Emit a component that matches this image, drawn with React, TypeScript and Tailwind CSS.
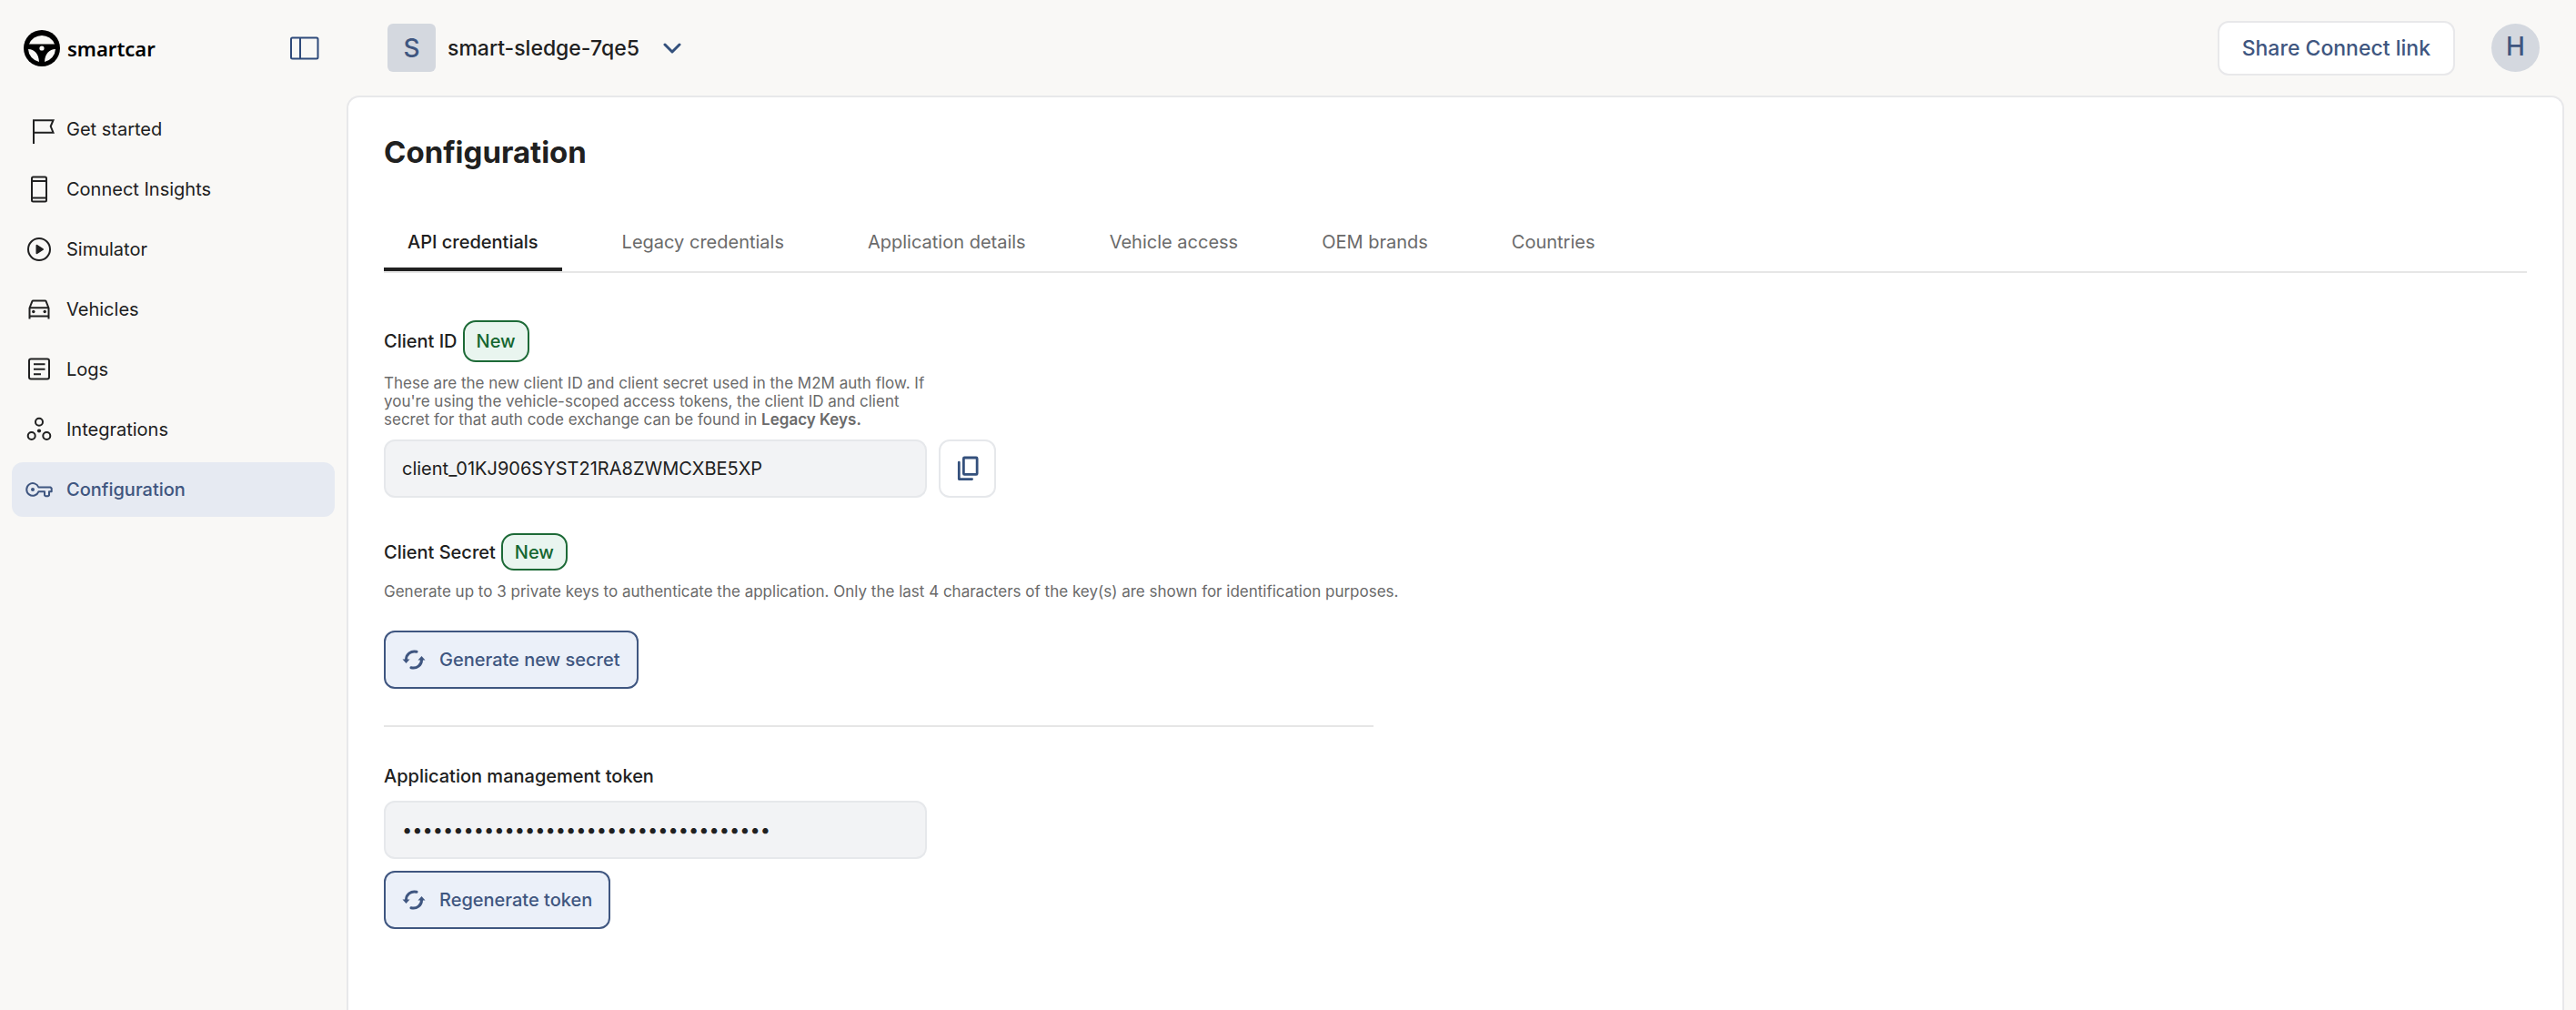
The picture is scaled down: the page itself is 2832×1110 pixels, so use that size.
import type { InputHTMLAttributes, ReactNode } from 'react';
import clsx from 'clsx';

interface IconProps {
  className?: string;
}

const navStroke = {
  viewBox: '0 0 28 28',
  fill: 'none',
  stroke: 'currentColor',
  strokeWidth: 2,
  strokeLinejoin: 'round' as const,
  'aria-hidden': true,
};

const FlagIcon = ({ className }: IconProps) => (
  <svg {...navStroke} strokeLinejoin="miter" className={className}>
    <path d="M8 30V4.200h21.500l-2.800 6.600 2.800 6.900H8" />
  </svg>
);

const PhoneIcon = ({ className }: IconProps) => (
  <svg {...navStroke} className={className}>
    <rect x="6" y="0.500" width="16" height="27" rx="1.500" />
    <path d="M6 5h16M6 23.500h16" />
  </svg>
);

const PlayIcon = ({ className }: IconProps) => (
  <svg {...navStroke} className={className}>
    <circle cx="14" cy="14" r="12" />
    <path d="M11.500 9.800v8.400l6.500-4.200z" fill="currentColor" />
  </svg>
);

const CarIcon = ({ className }: IconProps) => (
  <svg {...navStroke} className={className}>
    <path d="M3.500 24.500V12.500L6.300 5.300q.4-.8 1.200-.8h13q.8 0 1.200.8l2.800 7.200v12M3.500 12.300h21M3.500 21.500h21" />
    <circle cx="7.800" cy="16.500" r="1.700" fill="currentColor" stroke="none" />
    <circle cx="20.200" cy="16.500" r="1.700" fill="currentColor" stroke="none" />
  </svg>
);

const LogsIcon = ({ className }: IconProps) => (
  <svg {...navStroke} className={className}>
    <rect x="3" y="2.500" width="22" height="22" rx="2" />
    <path d="M8 8.200h12.500M8 13.700h12.500M8 19.200h8" />
  </svg>
);

const IntegrationsIcon = ({ className }: IconProps) => (
  <svg {...navStroke} className={className}>
    <circle cx="14" cy="5.800" r="4" />
    <circle cx="5.700" cy="21" r="4" />
    <circle cx="22.300" cy="21" r="4" />
    <circle cx="14" cy="15.500" r="2.100" fill="currentColor" stroke="none" />
  </svg>
);

const KeyIcon = ({ className }: IconProps) => (
  <svg {...navStroke} className={className}>
    <path d="M13.400 11.500H26.500l1.200 1.200v3.600H25v4l-1.500 1h-2l-1.500-1v-4h-6.600a6.800 6.800 0 1 1 0-4.800z" />
    <circle cx="7" cy="14" r="2" fill="currentColor" stroke="none" />
  </svg>
);

const PanelIcon = ({ className }: IconProps) => (
  <svg viewBox="0 0 32 26" fill="none" stroke="currentColor" strokeWidth="2" className={className} aria-hidden>
    <rect x="1" y="1.500" width="29.500" height="23" rx="1.500" />
    <path d="M11 1.500v23" />
  </svg>
);

const ChevronIcon = ({ className }: IconProps) => (
  <svg viewBox="0 0 20 12" fill="none" stroke="currentColor" strokeWidth="3" strokeLinecap="round" strokeLinejoin="round" className={className} aria-hidden>
    <path d="M2 2l8 8 8-8" />
  </svg>
);

const CopyIcon = ({ className }: IconProps) => (
  <svg viewBox="0 0 26 30" fill="none" stroke="currentColor" strokeWidth="3" strokeLinejoin="round" strokeLinecap="round" className={className} aria-hidden>
    <rect x="8" y="2" width="16" height="20" rx="1" />
    <path d="M2.500 7.500v20h15.500" />
  </svg>
);

const RefreshIcon = ({ className }: IconProps) => (
  <svg viewBox="0 0 26 22" fill="none" stroke="currentColor" strokeWidth="3" strokeLinecap="round" className={className} aria-hidden>
    <path d="M16 2.300A9 9 0 0 0 4.500 11.500" />
    <path d="M10 19.700A9 9 0 0 0 21.500 10.500" />
    <path d="M0.500 10.500h8L4.500 15z" fill="currentColor" stroke="none" />
    <path d="M17.500 11.500h8L21.500 7z" fill="currentColor" stroke="none" />
  </svg>
);

const WheelLogo = ({ className }: IconProps) => (
  <svg viewBox="0 0 40 40" className={className} aria-hidden>
    <circle cx="20" cy="20" r="20" fill="#000" />
    <path d="M6 15.500a15 15 0 0 1 28 0z" fill="#f9f8f6" />
    <path d="M5 21c7 .3 11.500 5 12 14A15 15 0 0 1 5 21zM35 21c-7 .3-11.500 5-12 14A15 15 0 0 0 35 21z" fill="#f9f8f6" />
    <circle cx="20" cy="20" r="2.600" fill="#f9f8f6" />
  </svg>
);

const navItems = [
  { label: 'Get started', icon: FlagIcon },
  { label: 'Connect Insights', icon: PhoneIcon },
  { label: 'Simulator', icon: PlayIcon },
  { label: 'Vehicles', icon: CarIcon },
  { label: 'Logs', icon: LogsIcon },
  { label: 'Integrations', icon: IntegrationsIcon },
  { label: 'Configuration', icon: KeyIcon, active: true },
];

const tabs = [
  'API credentials',
  'Legacy credentials',
  'Application details',
  'Vehicle access',
  'OEM brands',
  'Countries',
];

function Sidebar() {
  return (
    <aside className="w-[381px] shrink-0 px-[13px]">
      <div className="flex h-[106px] items-center justify-between pr-[17px] pl-[13px]">
        <a href="#" className="flex items-center gap-2 text-black">
          <WheelLogo className="h-10 w-10" />
          <span className="font-['Noto_Sans',sans-serif] text-[22px] leading-8 font-semibold">smartcar</span>
        </a>
        <button type="button" aria-label="Toggle sidebar" className="text-[#2f4a7a]">
          <PanelIcon className="h-[26px] w-8" />
        </button>
      </div>
      <nav className="mt-[6px] flex flex-col gap-[6px]">
        {navItems.map(({ label, icon: Icon, active }) => (
          <a
            key={label}
            href="#"
            aria-current={active ? 'page' : undefined}
            className={clsx(
              'flex h-[60px] items-center gap-4 rounded-xl px-4 text-[20px] leading-7',
              active ? 'bg-[#e6eaf2] font-medium text-[#3f5680]' : 'text-[#202020]',
            )}
          >
            <Icon className="h-7 w-7 shrink-0 overflow-visible" />
            {label}
          </a>
        ))}
      </nav>
    </aside>
  );
}

function Header() {
  return (
    <header className="flex h-[105px] items-center justify-between pr-10 pl-[45px]">
      <button type="button" className="flex items-center text-[23px] leading-8 font-medium text-[#202020]">
        <span className="flex h-[53px] w-[53px] items-center justify-center rounded-md bg-[#d4d8df] text-[28px] text-[#3f5680]">
          S
        </span>
        <span className="ml-[13px]">smart-sledge-7qe5</span>
        <ChevronIcon className="ml-[26px] h-3 w-5 text-[#34507c]" />
      </button>
      <div className="flex items-center gap-10">
        <button
          type="button"
          className="h-[60px] rounded-xl border-2 border-[#e8e8ea] bg-white px-[25px] text-[23px] leading-8 font-medium text-[#3f5680]"
        >
          Share Connect link
        </button>
        <button
          type="button"
          className="flex h-[53px] w-[53px] items-center justify-center rounded-full bg-[#d4d8df] pb-1 text-[28px] leading-8 font-medium text-[#3f5680]"
        >
          H
        </button>
      </div>
    </header>
  );
}

const NewBadge = ({ className }: IconProps) => (
  <span
    className={clsx(
      'flex items-center rounded-[14px] border-2 border-[#1d6a37] bg-[#e9f5ef] px-[13px] text-[20px] leading-7 font-medium text-[#14662f]',
      className,
    )}
  >
    New
  </span>
);

const ReadOnlyField = (props: InputHTMLAttributes<HTMLInputElement>) => (
  <input
    readOnly
    className="h-16 w-[597px] rounded-xl border-2 border-[#e6e8eb] bg-[#f2f3f5] px-[18px] text-[20px] leading-7 text-[#202020] outline-none"
    {...props}
  />
);

const ActionButton = ({ children }: { children: ReactNode }) => (
  <button
    type="button"
    className="flex h-16 items-center gap-[15px] self-start rounded-xl border-2 border-[#3f5680] bg-[#ebf0f9] px-[18px] text-[20px] leading-7 font-medium text-[#3f5680]"
  >
    <RefreshIcon className="h-[22px] w-[26px]" />
    {children}
  </button>
);

export default function App() {
  return (
    <div className="flex min-h-screen bg-[#f9f8f6] font-['Inter',sans-serif] text-[#202020]">
      <Sidebar />
      <div className="flex min-w-0 flex-1 flex-col">
        <Header />
        <main className="mr-[13px] flex-1 rounded-t-[14px] border-2 border-b-0 border-[#e8e8ea] bg-white px-[39px] pt-[38px]">
          <h1 className="text-[33px] leading-11 font-bold">Configuration</h1>

          {/* Tabs */}
          <div role="tablist" className="mt-[45px] flex gap-10 border-b-2 border-[#e6e6e6]">
            {tabs.map((tab, i) => (
              <button
                key={tab}
                type="button"
                role="tab"
                aria-selected={i === 0}
                className={clsx(
                  'h-16 border-b-4 px-[26px] pt-1 text-[20px] leading-7',
                  i === 0 ? 'border-[#202020] font-medium text-[#202020]' : 'border-transparent text-[#6a6a6a]',
                )}
              >
                {tab}
              </button>
            ))}
          </div>

          <div className="flex max-w-[1088px] flex-col">
            {/* Client ID */}
            <section className="mt-[52px] flex flex-col">
              <div className="flex items-center gap-[6px]">
                <label htmlFor="client-id" className="text-[20px] leading-7 font-medium">
                  Client ID
                </label>
                <NewBadge className="h-[46px]" />
              </div>
              <p className="mt-[13px] w-[600px] text-[17px] leading-5 text-[#6a6a6a]">
                These are the new client ID and client secret used in the M2M auth flow. If you're using the
                vehicle-scoped access tokens, the client ID and client secret for that auth code exchange can be
                found in <strong className="font-semibold">Legacy Keys.</strong>
              </p>
              <div className="mt-3 flex gap-[13px]">
                <ReadOnlyField id="client-id" type="text" value="client_01KJ906SYST21RA8ZWMCXBE5XP" />
                <button
                  type="button"
                  aria-label="Copy client ID"
                  className="flex h-16 w-[63px] items-center justify-center rounded-xl border-2 border-[#e6e8eb] bg-white text-[#34507c]"
                >
                  <CopyIcon className="h-7 w-6" />
                </button>
              </div>
            </section>

            {/* Client Secret */}
            <section className="mt-[39px] flex flex-col border-b-2 border-[#e6e6e6] pb-10">
              <div className="flex items-center gap-[6px]">
                <h2 className="text-[20px] leading-7 font-medium">Client Secret</h2>
                <NewBadge className="h-[41px]" />
              </div>
              <p className="mt-[13px] mb-[33px] text-[17px] leading-5 whitespace-nowrap text-[#6a6a6a]">
                Generate up to 3 private keys to authenticate the application. Only the last 4 characters of the
                key(s) are shown for identification purposes.
              </p>
              <ActionButton>Generate new secret</ActionButton>
            </section>

            {/* Management token */}
            <section className="mt-10 flex flex-col items-start gap-[13px]">
              <label htmlFor="management-token" className="text-[20px] leading-7 font-medium">
                Application management token
              </label>
              <ReadOnlyField id="management-token" type="password" value="00000000-0000-0000-0000-000000000000" />
              <ActionButton>Regenerate token</ActionButton>
            </section>
          </div>
        </main>
      </div>
    </div>
  );
}
